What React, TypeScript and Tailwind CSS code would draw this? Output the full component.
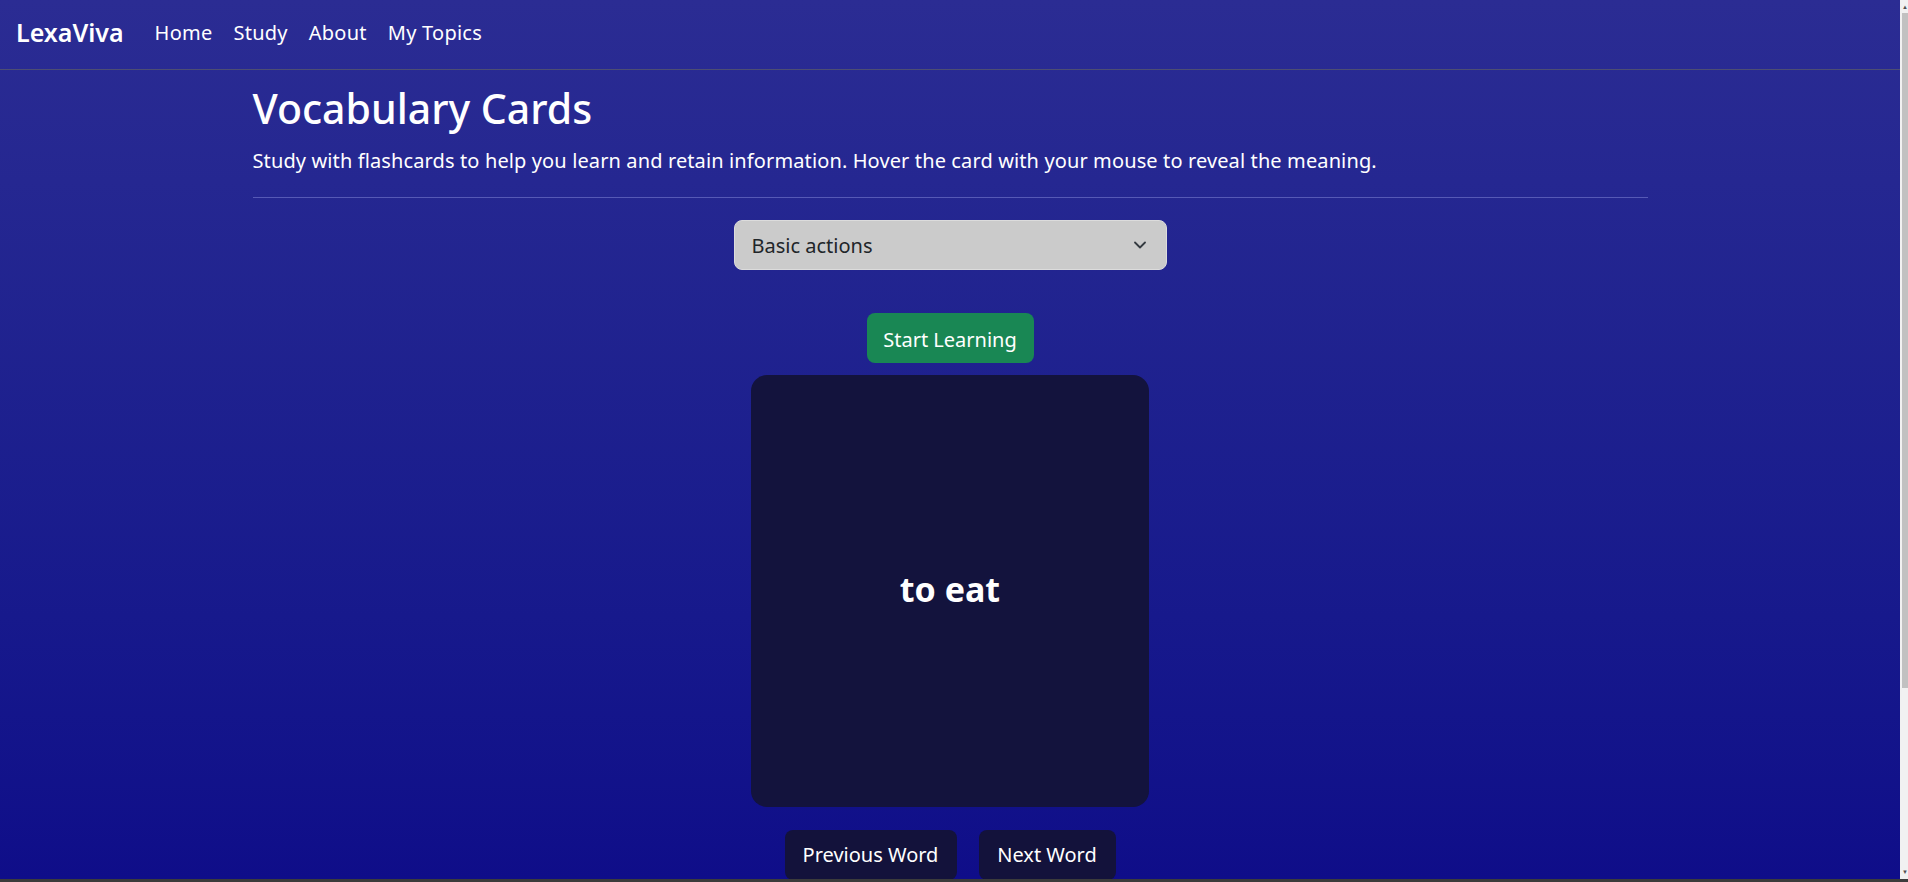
import React from "react";

export default function App() {
  return (
    <div className="flex flex-col w-[1908px] h-[882px] overflow-hidden font-['Noto_Sans','Open_Sans',sans-serif]">
      <div className="flex flex-1 min-h-0">
        <div className="flex-1 flex flex-col bg-linear-to-b from-[#2b2c93] to-[#0f0d89] text-white">
          <nav className="h-[70px] shrink-0 border-b border-[#4d4e72] flex items-center pl-[16px] pb-[4px]">
            <span className="text-[25px] font-semibold leading-none">LexaViva</span>
            <div className="flex items-center gap-[21px] ml-[31px] text-[20px] leading-none tracking-[0.25px]">
              <span>Home</span>
              <span>Study</span>
              <span>About</span>
              <span>My Topics</span>
            </div>
          </nav>
          <div className="w-[1395px] mx-auto flex flex-col">
            <h1 className="mt-[14px] text-[41px] leading-[48px] font-medium">Vocabulary Cards</h1>
            <p className="mt-[14px] text-[20px] leading-[30px] tracking-[0.12px]">
              Study with flashcards to help you learn and retain information. Hover the card with your mouse to reveal the meaning.
            </p>
            <div className="mt-[21px] h-px bg-[#5659b6]" />
            <div className="mt-[22px] mx-auto w-[433px] h-[50px] rounded-[8px] bg-[#cbcbcb] border border-[#dcdcdc] flex items-center justify-between pl-[17px] pr-[20px] text-[#212529] text-[20px]">
              <span className="pt-[2px]">Basic actions</span>
              <svg width="12" height="8" viewBox="0 0 12 8" fill="none">
                <path d="M1 1.5l5 5 5-5" stroke="#343a40" strokeWidth="1.8" strokeLinecap="round" strokeLinejoin="round" />
              </svg>
            </div>
            <div className="mt-[43px] mx-auto w-[167px] h-[50px] pt-[3px] rounded-[8px] bg-[#198754] flex items-center justify-center text-[20px]">
              Start Learning
            </div>
            <div className="mt-[12px] mx-auto w-[398px] h-[432px] rounded-[16px] bg-[#13133d] flex items-center justify-center">
              <span className="text-[34px] font-bold pb-[4px]">to eat</span>
            </div>
            <div className="mt-[23px] mx-auto flex gap-[22px]">
              <div className="w-[172px] h-[50px] rounded-[8px] bg-[#13123b] flex items-center justify-center text-[20px]">
                Previous Word
              </div>
              <div className="w-[137px] h-[50px] rounded-[8px] bg-[#13123b] flex items-center justify-center text-[20px]">
                Next Word
              </div>
            </div>
          </div>
        </div>
        <div className="w-[8px] shrink-0 bg-[#f1f1f1] flex flex-col">
          <div className="h-[13px] flex items-start justify-end pt-[4px] text-[#505050] text-[6px] leading-none">▲</div>
          <div className="ml-[2px] h-[675px] bg-[#c1c1c1]" />
          <div className="flex-1" />
          <div className="h-[13px] flex items-end justify-end pb-[4px] text-[#505050] text-[6px] leading-none">▼</div>
        </div>
      </div>
      <div className="h-[3px] shrink-0 bg-[#3b3b3b]" />
    </div>
  );
}
